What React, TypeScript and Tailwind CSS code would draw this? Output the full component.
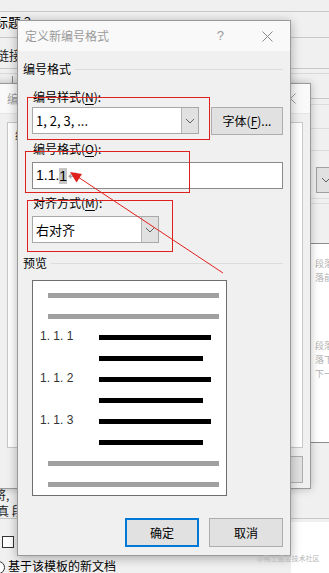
import React from "react";

function Chevron() {
  return (
    <svg width="10" height="6" viewBox="0 0 10 6" fill="none">
      <path d="M1 1 L5 5 L9 1" stroke="#606060" strokeWidth="1" />
    </svg>
  );
}

function CloseIcon({ color = "#707070" }: { color?: string }) {
  return (
    <svg width="11" height="11" viewBox="0 0 11 11" fill="none">
      <path d="M0.5 0.5 L10.5 10.5 M10.5 0.5 L0.5 10.5" stroke={color} strokeWidth="1" />
    </svg>
  );
}

function Select({ value, width }: { value: string; width: string }) {
  return (
    <div className={`flex h-[27px] ${width} border border-[#a8a8a8] bg-white`}>
      <div className="flex-1 flex items-center pl-[3px] text-[13px] text-black">{value}</div>
      <div className="w-[17px] flex items-center justify-center bg-[#e1e1e1] border-l border-[#b4b4b4]">
        <Chevron />
      </div>
    </div>
  );
}

function Label({ text, hot }: { text: string; hot: string }) {
  return (
    <div className="h-[16px] leading-[16px] pl-[15px] text-[12px] text-black">
      {text}(<span className="underline underline-offset-2">{hot}</span>):
    </div>
  );
}

function Section({ title }: { title: string }) {
  return (
    <div className="flex items-center h-[16px] pl-[5px] pr-[7px] gap-[4px]">
      <span className="text-[12px] leading-[16px] text-black">{title}</span>
      <div className="flex-1 h-px bg-[#dcdcdc]"></div>
    </div>
  );
}

function Bar({ gray, short }: { gray?: boolean; short?: boolean }) {
  if (gray) return <div className="ml-[15px] w-[171px] h-[5px] bg-[#a0a0a0]"></div>;
  return <div className={`h-[5px] bg-black ${short ? "w-[104px]" : "w-[112px]"}`}></div>;
}

function PreviewRow({ num, short }: { num?: string; short?: boolean }) {
  return (
    <div className="flex h-[21px] items-start pl-[7px]">
      <div className="w-[59px] -mt-[6px] text-[12px] leading-[14px] text-[#333] font-['Liberation_Sans',sans-serif]">
        {num ?? ""}
      </div>
      <Bar short={short} />
    </div>
  );
}

function Preview() {
  return (
    <div className="ml-[14px] w-[195px] h-[216px] border border-[#6e6e6e] bg-white pt-[12px]">
      <div className="h-[21px]"><Bar gray /></div>
      <div className="h-[21px]"><Bar gray /></div>
      <PreviewRow num="1. 1. 1" />
      <PreviewRow short />
      <PreviewRow num="1. 1. 2" />
      <PreviewRow short />
      <PreviewRow num="1. 1. 3" />
      <PreviewRow short />
      <div className="h-[21px]"><Bar gray /></div>
      <div className="h-[21px]"><Bar gray /></div>
    </div>
  );
}

function Backdrop() {
  return (
    <>
      {/* back window lines and text */}
      <div className="absolute left-0 right-0 top-[11px] h-px bg-[#c8c8c8]"></div>
      <div className="absolute left-[-5px] top-[13px] text-[13px] leading-[18px] text-black whitespace-nowrap">标题 2</div>
      <div className="absolute left-0 right-0 top-[37px] h-px bg-[#c8c8c8]"></div>
      <div className="absolute left-[-4px] top-[46px] text-[13px] leading-[18px] text-[#222] whitespace-nowrap">链接</div>
      <div className="absolute left-0 right-0 top-[68px] h-px bg-[#c8c8c8]"></div>
      <div className="absolute left-0 right-0 top-[73px] h-px bg-[#d8d8d8]"></div>
      <div className="absolute left-[12px] top-[76px] h-[7px] w-px bg-[#909090]"></div>

      {/* right strip of back window */}
      <div className="absolute left-[311px] right-0 top-[98px] h-px bg-[#c8c8c8]"></div>
      <div className="absolute left-[311px] right-0 top-[104px] h-px bg-[#dcdcdc]"></div>
      <div className="absolute left-[311px] right-0 top-[128px] h-px bg-[#dcdcdc]"></div>
      <div className="absolute left-[311px] right-0 top-[150px] h-px bg-[#dcdcdc]"></div>
      <div className="absolute left-[316px] top-[167px] w-[30px] h-[26px] border border-[#a0a0a0] bg-[#e1e1e1] flex items-center pl-[4px]">
        <Chevron />
      </div>
      <div className="absolute left-[311px] right-0 top-[198px] h-px bg-[#dcdcdc]"></div>
      <div className="absolute left-[311px] right-0 top-[203px] h-px bg-[#dcdcdc]"></div>
      <div className="absolute left-[311px] right-0 top-[243px] h-[200px] overflow-hidden whitespace-nowrap bg-white border-t border-b border-[#8c8c8c] text-[9px] leading-[14px] text-[#b0b0b0] pl-[4px]">
        <div className="mt-[13px]">段落前一段落</div>
        <div>落前一段落</div>
        <div className="mt-[54px]">段落下一段落</div>
        <div>落下一段落</div>
        <div>下一段落</div>
      </div>
      <div className="absolute left-0 right-0 top-[518px] h-px bg-[#c8c8c8]"></div>
      <div className="absolute left-[291px] right-0 top-[522px] bottom-0 bg-white"></div>

      {/* left bottom of back window */}
      <div className="absolute left-[-6px] top-[489px] text-[12px] leading-[12px] text-[#222] whitespace-nowrap">将,</div>
      <div className="absolute left-[-3px] top-[505px] text-[12px] leading-[12px] text-[#222] whitespace-nowrap">真 段</div>
      <div className="absolute left-[2px] top-[536px] w-[12px] h-[12px] border border-[#333] bg-white"></div>
      <div className="absolute left-[-8px] top-[561px] w-[13px] h-[13px] rounded-full border border-[#333] bg-white"></div>
      <div className="absolute left-[8px] top-[558px] text-[12px] leading-[15px] text-black whitespace-nowrap">基于该模板的新文档</div>

      {/* middle dialog */}
      <div className="absolute left-[-20px] top-[83px] w-[331px] h-[406px] bg-[#f0f0f0] border border-[#9a9a9a] shadow-[0_0_8px_rgba(0,0,0,0.25)] flex flex-col">
        <div className="h-[30px] bg-[#f9f9f9] border-b border-[#e4e4e4] flex items-center justify-between pl-[26px] pr-[14px]">
          <span className="text-[12px] text-[#9a9a9a]">编辑</span>
          <CloseIcon color="#9a9a9a" />
        </div>
        <div className="flex-1 flex flex-col px-[8px] pt-[8px]">
          <div className="ml-[18px] w-[296px] h-[326px] bg-white border border-[#c8c8c8] pl-[7px] pt-[3px] text-[12px] text-[#222]">
            编
          </div>
          <div className="mt-[8px] ml-[240px] w-[74px] h-[27px] bg-[#e1e1e1] border border-[#adadad]"></div>
        </div>
      </div>
    </>
  );
}

function FrontDialog() {
  return (
    <div className="absolute left-[17px] top-[20px] w-[274px] h-[536px] bg-[#f0f0f0] border border-[#9a9a9a] shadow-[0_2px_10px_rgba(0,0,0,0.3)] flex flex-col">
      <div className="h-[30px] bg-[#f9f9f9] flex items-center pl-[7px] pr-[17px]">
        <span className="text-[12px] text-[#9a9a9a] flex-1">定义新编号格式</span>
        <span className="text-[13px] text-[#9a9a9a] mr-[38px] font-['Liberation_Sans',sans-serif]">?</span>
        <CloseIcon color="#8a8a8a" />
      </div>

      <div className="flex flex-col">
        <div className="mt-[10px]"><Section title="编号格式" /></div>

        <div className="mt-[12px]"><Label text="编号样式" hot="N" /></div>
        <div className="mt-[2px] flex pl-[14px] gap-[12px]">
          <Select value="1, 2, 3, ..." width="w-[167px]" />
          <div className="w-[72px] h-[28px] bg-[#e1e1e1] border border-[#adadad] flex items-center justify-center text-[12px] text-black">
            字体(<span className="underline underline-offset-2">F</span>)...
          </div>
        </div>

        <div className="mt-[6px]"><Label text="编号格式" hot="O" /></div>
        <div className="mt-[5px] ml-[14px] w-[251px] h-[27px] border border-[#8a8a8a] bg-white flex items-center pl-[3px] text-[14px] text-black font-['Liberation_Sans',sans-serif]">
          <span>1.1.</span>
          <span className="bg-[#c6c6c6] leading-[16px]">1</span>
          <span className="text-[12px] text-[#9a9a9a] ml-px">↵</span>
        </div>

        <div className="mt-[6px]"><Label text="对齐方式" hot="M" /></div>
        <div className="mt-[5px] ml-[14px]">
          <Select value="右对齐" width="w-[127px]" />
        </div>

        <div className="mt-[12px]"><Section title="预览" /></div>
        <div className="mt-[9px]"><Preview /></div>

        <div className="mt-[22px] flex justify-end gap-[10px] pr-[7px]">
          <div className="w-[74px] h-[29px] bg-[#e1e1e1] border-2 border-[#0078d7] flex items-center justify-center text-[12px] text-black">
            确定
          </div>
          <div className="w-[74px] h-[29px] bg-[#e1e1e1] border border-[#adadad] flex items-center justify-center text-[12px] text-black">
            取消
          </div>
        </div>
      </div>
    </div>
  );
}

function Annotations() {
  return (
    <>
      <div className="absolute left-[27px] top-[97px] w-[183px] h-[43px] border border-[#e0201c]"></div>
      <div className="absolute left-[25px] top-[151px] w-[165px] h-[42px] border border-[#e0201c]"></div>
      <div className="absolute left-[27px] top-[200px] w-[146px] h-[52px] border border-[#e0201c]"></div>
      <svg className="absolute left-0 top-0" width="329" height="573" viewBox="0 0 329 573">
        <line x1="223" y1="273" x2="78" y2="177" stroke="#e0201c" strokeWidth="1" />
        <polygon points="70,172 82,174 76.5,182.5" fill="#e0201c" />
      </svg>
    </>
  );
}

export default function App() {
  return (
    <div className="relative w-[329px] h-[573px] overflow-hidden bg-[#f0f0f0] font-['Noto_Sans_CJK_SC',sans-serif]">
      <Backdrop />
      <FrontDialog />
      <Annotations />
      <div className="absolute left-[257px] top-[553px] text-[7px] leading-[10px] text-[#b8b8b8] whitespace-nowrap">@稀土掘金技术社区</div>
    </div>
  );
}
